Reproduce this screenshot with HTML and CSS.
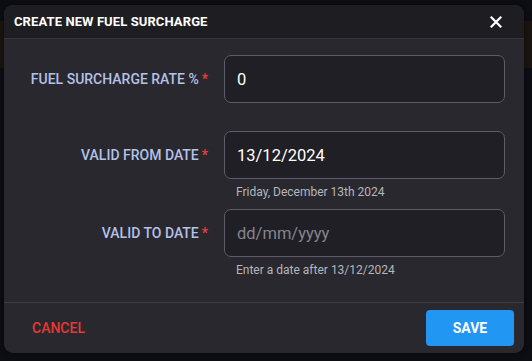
FILE: index.html
```html
<!DOCTYPE html>
<html>
<head>
    <title>Create new fuel surcharge</title>
    <link rel="stylesheet" href="styles.css">
</head>
<body>
    <div class="dialog">
        <div class="dialog-header">
            <span class="dialog-title">CREATE NEW FUEL SURCHARGE</span>
            <button class="close-btn" aria-label="Close">
                <svg width="12" height="12" viewBox="0 0 12 12">
                    <path d="M1.5 1.5 L10.5 10.5 M10.5 1.5 L1.5 10.5" stroke="#fff" stroke-width="2.2" stroke-linecap="square"/>
                </svg>
            </button>
        </div>
        <form class="form">
            <label class="field-label" for="rate">FUEL SURCHARGE RATE %<span class="req">*</span></label>
            <div class="field">
                <input id="rate" class="input" type="text" value="0">
            </div>

            <label class="field-label" for="from">VALID FROM DATE<span class="req">*</span></label>
            <div class="field with-hint">
                <input id="from" class="input" type="text" value="13/12/2024">
                <div class="hint">Friday, December 13th 2024</div>
            </div>

            <label class="field-label" for="to">VALID TO DATE<span class="req">*</span></label>
            <div class="field with-hint last">
                <input id="to" class="input" type="text" placeholder="dd/mm/yyyy">
                <div class="hint">Enter a date after 13/12/2024</div>
            </div>
        </form>
        <div class="dialog-footer">
            <button class="btn-cancel">CANCEL</button>
            <button class="btn-save">SAVE</button>
        </div>
    </div>
</body>
</html>
```

FILE: styles.css
```css
body {
    margin: 0;
    height: 361px;
    overflow: hidden;
    font-family: Roboto, 'Liberation Sans', sans-serif;
    /* page behind the overlay, with its orange-ish bar dimmed */
    background: linear-gradient(to bottom, #0d0e14 21px, #1b1510 21px, #1b1510 68px, #0d0e14 68px);
}

.dialog {
    width: 520px;
    margin: 5px 0 0 4px;
    background-color: #28282e;
    border-radius: 9px;
    overflow: hidden;
    box-shadow: 0 0 6px rgba(0,0,0,0.5);
}

.dialog-header {
    height: 33px;
    display: flex;
    align-items: center;
    justify-content: space-between;
    padding: 0 22px 0 10px;
    background-color: #1e1e22;
    border-bottom: 1px solid #35353c;
}

.dialog-title {
    color: #fff;
    font-size: 13px;
    font-weight: 700;
    letter-spacing: 0.1px;
}

.close-btn {
    background: none;
    border: none;
    padding: 0;
    display: flex;
    cursor: pointer;
}

.form {
    display: grid;
    grid-template-columns: 1fr 281px;
    column-gap: 16px;
    align-items: start;
    padding: 16px 19px 0 19px;
}

.field-label {
    height: 48px;
    display: flex;
    align-items: center;
    justify-content: flex-end;
    color: #b4c1e8;
    font-size: 14px;
    font-weight: 500;
}

.req {
    color: #f23b3b;
    margin-left: 3px;
}

.field {
    margin-bottom: 28px;
}

.field.with-hint {
    margin-bottom: 9px;
}

.field.last {
    margin-bottom: 24px;
}

.input {
    display: block;
    width: 100%;
    height: 48px;
    box-sizing: border-box;
    padding: 0 12px;
    background-color: #1f1f25;
    border: 1px solid #5c5c6a;
    border-radius: 7px;
    color: #fff;
    font-family: Roboto, 'Liberation Sans', sans-serif;
    font-size: 16.5px;
    outline: none;
}

.input::placeholder {
    color: #85858e;
}

.hint {
    margin: 5px 0 0 12px;
    height: 16px;
    line-height: 16px;
    color: #b6b6bd;
    font-size: 12px;
}

.dialog-footer {
    display: flex;
    justify-content: space-between;
    align-items: center;
    padding: 7px 10px 7px 12px;
    border-top: 1px solid #3b3b43;
}

.btn-cancel {
    background: none;
    border: none;
    padding: 0 16px;
    height: 36px;
    color: #e53935;
    font-family: Roboto, 'Liberation Sans', sans-serif;
    font-size: 14px;
    font-weight: 500;
    cursor: pointer;
}

.btn-save {
    width: 88px;
    height: 36px;
    border: none;
    border-radius: 4px;
    background-color: #2196f3;
    color: #fff;
    font-family: Roboto, 'Liberation Sans', sans-serif;
    font-size: 14px;
    font-weight: 700;
    cursor: pointer;
}
```
